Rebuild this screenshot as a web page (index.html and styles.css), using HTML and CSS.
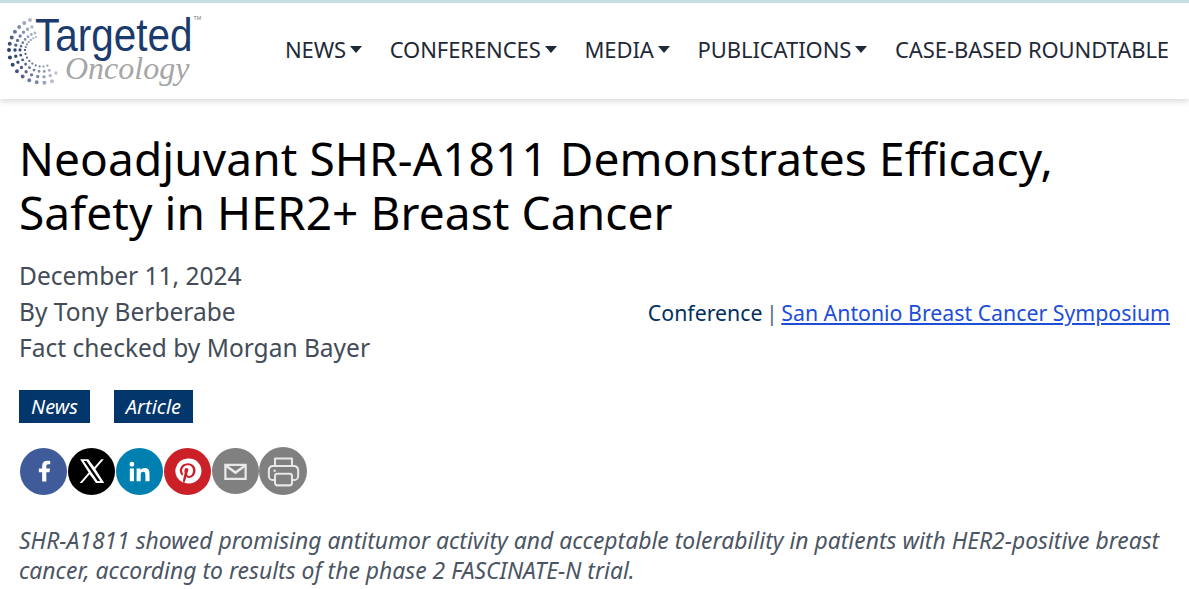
FILE: index.html
```html
<!DOCTYPE html>
<html lang="en">
<head>
<meta charset="utf-8">
<title>Neoadjuvant SHR-A1811 Demonstrates Efficacy, Safety in HER2+ Breast Cancer</title>
<link rel="stylesheet" href="styles.css">
</head>
<body>
<header class="site-header">
  <a class="logo" href="#">
    <svg class="logo-dots" viewBox="0 0 80 90" width="80" height="90" aria-hidden="true">
      <defs>
        <linearGradient id="fade" gradientUnits="userSpaceOnUse" x1="8" y1="50" x2="50" y2="30">
          <stop offset="0" stop-color="#27406f"/>
          <stop offset=".55" stop-color="#9aa3bd"/>
          <stop offset="1" stop-color="#e6e6ee"/>
        </linearGradient>
        <linearGradient id="fade2" gradientUnits="userSpaceOnUse" x1="10" y1="62" x2="62" y2="78">
          <stop offset="0" stop-color="#27406f"/>
          <stop offset=".6" stop-color="#7f8bab"/>
          <stop offset="1" stop-color="#dcdde8"/>
        </linearGradient>
      </defs>
      <g fill="none" stroke-linecap="round" stroke-dasharray="0 1">
        <path d="M30 20A33 33 0 0 0 9 50" pathLength="6" stroke="url(#fade)" stroke-width="4"/>
        <path d="M9 50A33 33 0 0 0 59 78" pathLength="9" stroke="url(#fade2)" stroke-width="4"/>
        <path d="M32 27A27 27 0 0 0 15 50" pathLength="6" stroke="url(#fade)" stroke-width="3.4"/>
        <path d="M15 50A27 27 0 0 0 56 73" pathLength="9" stroke="url(#fade2)" stroke-width="3.4"/>
        <path d="M35 33A22 22 0 0 0 20 50" pathLength="6" stroke="url(#fade)" stroke-width="2.8"/>
        <path d="M20 50A22 22 0 0 0 54 68" pathLength="9" stroke="url(#fade2)" stroke-width="2.8"/>
        <path d="M36 37A17 17 0 0 0 25 50" pathLength="6" stroke="url(#fade)" stroke-width="2.2"/>
        <path d="M25 50A17 17 0 0 0 51 64" pathLength="9" stroke="url(#fade2)" stroke-width="2.2"/>
      </g>
    </svg>
    <span class="logo-top">Targeted<sup class="tm">TM</sup></span>
    <span class="logo-bottom">Oncology</span>
  </a>
  <nav class="main-nav">
    <a href="#">NEWS<i class="caret"></i></a>
    <a href="#">CONFERENCES<i class="caret"></i></a>
    <a href="#">MEDIA<i class="caret"></i></a>
    <a href="#">PUBLICATIONS<i class="caret"></i></a>
    <a href="#">CASE-BASED ROUNDTABLE</a>
  </nav>
</header>
<main class="article">
  <h1>Neoadjuvant SHR-A1811 Demonstrates Efficacy, Safety in HER2+ Breast Cancer</h1>
  <div class="meta">
    <div class="byline">
      <div>December 11, 2024</div>
      <div>By Tony Berberabe</div>
      <div>Fact checked by Morgan Bayer</div>
    </div>
    <div class="conference">Conference <span class="sep">|</span> <a href="#">San Antonio Breast Cancer Symposium</a></div>
  </div>
  <div class="tags">
    <span class="tag">News</span>
    <span class="tag">Article</span>
  </div>
  <div class="share">
    <a class="btn fb" href="#" aria-label="Facebook"><svg viewBox="0 0 24 24" width="28" height="28"><path fill="#fff" d="M14 21v-8h2.700l.5-3.200H14V7.900c0-.9.4-1.700 1.800-1.700h1.500V3.400c-.8-.1-1.700-.2-2.500-.2-2.700 0-4.400 1.600-4.400 4.500v2.100H7.600V13h2.800v8z"/></svg></a>
    <a class="btn x" href="#" aria-label="X"><svg viewBox="0 0 24 24" width="30" height="30"><path fill="#fff" fill-rule="evenodd" d="M2.500 2.500h6.600l4.700 6.500 5.600-6.500h2L14.700 10.300 21.800 21.500h-6.600l-5.100-7-6 7h-2l7.200-8.300zM5.400 4l11 16h2.200L7.600 4z"/></svg></a>
    <a class="btn li" href="#" aria-label="LinkedIn"><svg viewBox="0 0 24 24" width="29" height="29"><path fill="#fff" d="M4 9.500h3.400V20H4zM5.700 4a2 2 0 1 1 0 4 2 2 0 0 1 0-4zM9.600 9.500h3.200v1.500c.6-1 1.800-1.800 3.500-1.800 3.300 0 4 2.100 4 5V20h-3.400v-5c0-1.400-.2-2.800-1.900-2.800s-2 1.300-2 2.700V20H9.600z"/></svg></a>
    <a class="btn pin" href="#" aria-label="Pinterest"><svg viewBox="0 0 24 24" width="30" height="30"><path fill="#fff" d="M12 2a10 10 0 0 0-3.800 19.300c-.1-.8-.2-2 0-2.900l1.200-5s-.3-.6-.3-1.500c0-1.400.8-2.400 1.800-2.400.9 0 1.300.6 1.300 1.400 0 .9-.5 2.100-.8 3.300-.2 1 .5 1.800 1.500 1.800 1.800 0 3.100-1.900 3.100-4.600 0-2.400-1.700-4-4.200-4-2.800 0-4.500 2.100-4.500 4.300 0 .9.300 1.800.7 2.300.1.100.1.200.1.300l-.3 1.100c0 .2-.1.200-.3.100-1.200-.6-2-2.400-2-3.800 0-3.100 2.300-6 6.500-6 3.400 0 6 2.400 6 5.700 0 3.400-2.100 6.100-5.100 6.100-1 0-1.900-.5-2.200-1.100l-.6 2.300c-.2.800-.8 1.900-1.200 2.500A10 10 0 1 0 12 2z"/></svg></a>
    <a class="btn mail" href="#" aria-label="Email"><svg viewBox="0 0 24 24" width="27" height="27"><path fill="none" stroke="#e8e8e8" stroke-width="2" d="M3 6h18v12.500H3z"/><path fill="none" stroke="#e8e8e8" stroke-width="2.200" d="M3 6.500l9 6.500 9-6.500"/></svg></a>
    <a class="btn print" href="#" aria-label="Print"><svg viewBox="0 0 24 24" width="37" height="37"><g fill="none" stroke="#e8e8e8" stroke-width="1.300" stroke-linejoin="round"><path d="M6.500 8.500V3.500h11v5"/><path d="M6.500 17.500H5a2.500 2.500 0 0 1-2.500-2.500v-4A2.500 2.500 0 0 1 5 8.500h14a2.500 2.500 0 0 1 2.500 2.500v4a2.500 2.500 0 0 1-2.500 2.500h-1.500"/><rect x="6.500" y="13.500" width="11" height="7.500" rx="1.500"/><path d="M5.500 11.500h1.500"/></g></svg></a>
  </div>
  <p class="summary">SHR-A1811 showed promising antitumor activity and acceptable tolerability in patients with HER2-positive breast cancer, according to results of the phase 2 FASCINATE-N trial.</p>
</main>
</body>
</html>
```

FILE: styles.css
```css
* { box-sizing: border-box; }
html, body { margin: 0; padding: 0; background: #fff; overflow: hidden; }
body { font-family: "Noto Sans", "Open Sans", sans-serif; color: #000; height: 589px; }
a { text-decoration: none; color: inherit; }

.site-header {
  height: 99px;
  border-top: 3px solid #c5dfe3;
  display: flex;
  align-items: center;
  justify-content: space-between;
  padding-right: 20px;
  box-shadow: 0 2px 6px rgba(0,0,0,.16);
  background: #fff;
}
.logo { position: relative; display: block; width: 200px; height: 96px; flex: none; }
.logo-dots { position: absolute; left: 0; top: -3px; }
.logo-top {
  position: absolute; left: 35px; top: 8px;
  font: 46px/48px "Liberation Sans", sans-serif;
  transform: scaleX(.88);
  transform-origin: left top;
  color: #1b3a6d;
  white-space: nowrap;
}
.tm { font-size: 6px; vertical-align: top; line-height: 14px; color: #777; margin-left: 1px; }
.logo-bottom {
  position: absolute; left: 65px; top: 46px;
  font: italic 32px/38px "Liberation Serif", serif;
  color: #a4a6a8;
  white-space: nowrap;
}
.main-nav { display: flex; align-items: center; gap: 27.700px; margin-top: -4px; }
.main-nav a { font-size: 22px; line-height: 30px; color: #1f2937; display: flex; align-items: center; letter-spacing: -.08px; }
.caret { display: block; margin-left: 4px; width: 0; height: 0; border: 6px solid transparent; border-top: 7px solid #1f2937; border-bottom: 0; }

.article { padding: 32px 19px 0; }
h1 { margin: 0; font-size: 46px; line-height: 54px; font-weight: 400; color: #000; letter-spacing: .1px; }
.meta { display: flex; justify-content: space-between; align-items: center; margin-top: 19px; }
.byline { font-size: 24.500px; line-height: 36px; color: #434c58; }
.conference { font-size: 21.300px; line-height: 30px; color: #03305f; padding-top: 2px; }
.conference .sep { color: #4b6a88; margin: 0 -2px; }
.conference a { color: #1d4ed8; text-decoration: underline; }
.tags { display: flex; gap: 24px; margin-top: 24px; }
.tag { background: #03366b; color: #fff; font-style: italic; font-size: 20px; line-height: 33px; height: 33px; padding: 0 12px; }
.share { display: flex; align-items: center; gap: 1px; margin-top: 24px; margin-left: 1px; }
.btn { width: 47px; height: 47px; border-radius: 50%; display: flex; align-items: center; justify-content: center; flex: none; }
.fb { background: #3f5b99; }
.x { background: #000; }
.li { background: #0080b1; }
.pin { background: #cb2027; }
.mail { background: #808080; width: 46.500px; height: 46.500px; }
.print { background: #808080; width: 48px; height: 48px; margin-left: -.500px; }
.summary { margin: 31px 0 0; font-size: 22.900px; line-height: 30px; font-style: italic; color: #4b5563; }
```
